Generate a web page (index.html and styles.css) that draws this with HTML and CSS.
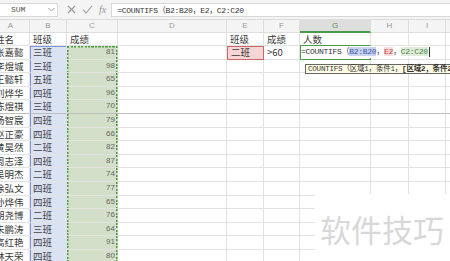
FILE: index.html
```html
<!DOCTYPE html>
<html lang="zh-CN">
<head>
  <meta charset="UTF-8">
  <title>COUNTIFS</title>
  <link rel="stylesheet" href="styles.css">
</head>
<body>
  <div class="app">
    <div class="formula-bar">
      <div class="name-box">
        <span>SUM</span>
        <svg class="chev" width="7" height="5" viewBox="0 0 7 5"><path d="M0.5 1l3 3 3-3" fill="none" stroke="#999" stroke-width="1"/></svg>
      </div>
      <div class="fx-tools">
        <svg width="9" height="9" viewBox="0 0 9 9"><path d="M1 1l7 7M8 1l-7 7" stroke="#999" stroke-width="1.1"/></svg>
        <svg width="11" height="9" viewBox="0 0 11 9"><path d="M1 4.5l3 3.5 6-7" fill="none" stroke="#999" stroke-width="1.1"/></svg>
        <span class="fx">fx</span>
      </div>
      <div class="formula-input">=COUNTIFS（B2:B20，E2，C2:C20</div>
    </div>

    <div class="sheet">
      <div class="row heads">
        <div class="cell">A</div><div class="cell">B</div><div class="cell">C</div><div class="cell">D</div>
        <div class="cell">E</div><div class="cell">F</div><div class="cell active-head">G</div><div class="cell">H</div>
        <div class="cell">I</div><div class="cell"></div>
      </div>
      <div class="row">
        <div class="cell name">姓名</div><div class="cell">班级</div><div class="cell">成绩</div><div class="cell"></div>
        <div class="cell">班级</div><div class="cell">成绩</div><div class="cell above-active">人数</div><div class="cell"></div>
        <div class="cell"></div><div class="cell"></div>
      </div>
      <div class="row first">
        <div class="cell name">张嘉懿</div><div class="cell cls">三班</div><div class="cell score">81</div><div class="cell"></div>
        <div class="cell crit">二班</div><div class="cell">&gt;60</div>
        <div class="cell active">
          <div class="edit">=COUNTIFS<span class="full">（</span><span class="ref-b">B2:B20</span><span class="full">，</span><span class="ref-e">E2</span><span class="full">，</span><span class="ref-c">C2:C20</span><span class="caret"></span></div>
        </div>
        <div class="cell"></div><div class="cell"></div><div class="cell"></div>
      </div>
    </div>

    <div class="tip">COUNTIFS（区域1，条件1，<b>[区域2，条件2]</b>，…）</div>

    <div class="mark">软件技巧</div>
  </div>

  <script>
    const rows = [
      ['李煜城', '三班', 98], ['王懿轩', '五班', 65], ['刘烨华', '四班', 96],
      ['陈煜祺', '三班', 70], ['杨智宸', '四班', 79], ['赵正豪', '四班', 66],
      ['黄昊然', '二班', 82], ['周志泽', '四班', 87], ['吴明杰', '二班', 74],
      ['徐弘文', '四班', 77], ['孙烨伟', '四班', 65], ['胡尧博', '二班', 76],
      ['朱鹏涛', '三班', 64], ['高红艳', '四班', 91], ['林天荣', '四班', 80]
    ];
    const sheet = document.querySelector('.sheet');

    rows.forEach(([name, cls, score], i) => {
      const row = document.createElement('div');
      row.className = i === 3 ? 'row sep' : 'row';
      row.innerHTML = `
        <div class="cell name">${name}</div>
        <div class="cell cls">${cls}</div>
        <div class="cell score">${score}</div>
        <div class="cell"></div><div class="cell"></div><div class="cell"></div>
        <div class="cell"></div><div class="cell"></div><div class="cell"></div><div class="cell"></div>
      `;
      sheet.appendChild(row);
    });
  </script>
</body>
</html>
```

FILE: styles.css
```css
* {
  margin: 0;
  padding: 0;
  box-sizing: border-box;
}

body {
  width: 450px;
  height: 261px;
  overflow: hidden;
  background: #fff;
  font-family: 'Noto Sans CJK SC', sans-serif;
  color: #333;
}

.app {
  position: relative;
  width: 450px;
  height: 261px;
  overflow: hidden;
}

/* Formula bar */
.formula-bar {
  display: flex;
  align-items: center;
  height: 20px;
  background: #f4f4f4;
  border-bottom: 1px solid #dcdcdc;
}

.name-box {
  display: flex;
  align-items: center;
  justify-content: space-between;
  width: 58px;
  height: 14px;
  padding: 0 2px 0 11px;
  background: #fff;
  border: 1px solid #d8d8d8;
  border-left: none;
  font-family: 'Liberation Mono', monospace;
  font-size: 8px;
  color: #555;
}

.fx-tools {
  display: flex;
  align-items: center;
  gap: 6px;
  padding: 0 5px 0 9px;
}

.fx {
  font-family: 'Liberation Serif', serif;
  font-style: italic;
  font-size: 10px;
  color: #999;
}

.formula-input {
  flex: 1;
  height: 14px;
  padding-left: 5px;
  line-height: 13px;
  background: #fff;
  border: 1px solid #d8d8d8;
  border-right: none;
  font-family: 'Liberation Mono', 'Noto Sans CJK SC', monospace;
  font-size: 8px;
  letter-spacing: -0.3px;
  color: #333;
  white-space: nowrap;
}

/* Sheet grid */
.sheet {
  margin-left: -8px;
}

.row {
  display: grid;
  grid-template-columns: 38px 37px 51px 109px 37px 36px 71px 38px 37px 60px;
  height: 13px;
}

.row + .row + .row {
  height: 13.6px;
}

.cell {
  position: relative;
  padding: 0 3px;
  border-right: 1px solid #e2e2e2;
  border-bottom: 1px solid #e2e2e2;
  font-size: 9.5px;
  line-height: 12px;
  color: #3a3a3a;
  white-space: nowrap;
  overflow: hidden;
}

.row.sep .cell {
  border-bottom-color: #bdbdbd;
}

.heads .cell {
  background: #f4f4f4;
  border-color: #dedede;
  text-align: center;
  font-family: 'Liberation Sans', sans-serif;
  font-size: 8px;
  color: #9a9a9a;
}

.heads .active-head {
  background: #dedede;
  color: #4a9a4a;
  border-bottom: 2px solid #4a9a4a;
}

.name {
  padding-left: 3px;
}

.cls {
  background: #dbe2f4;
  border-right-color: transparent;
  box-shadow: inset 1px 0 #7f95d6;
  color: #444;
}

.first .cls {
  box-shadow: inset 1px 0 #7f95d6, inset 0 1px #7f95d6;
}

.score {
  padding-right: 2px;
  text-align: right;
  font-family: 'Liberation Sans', sans-serif;
  font-size: 8px;
  color: #666;
  background-color: #d4dfc9;
  border-right-color: transparent;
  background-image:
    repeating-linear-gradient(to bottom, #4f9c40 0 2px, transparent 2px 3.5px),
    repeating-linear-gradient(to bottom, #4f9c40 0 2px, transparent 2px 3.5px);
  background-size: 1.5px 100%, 1.5px 100%;
  background-position: left top, right top;
  background-repeat: no-repeat;
}

.first .score {
  background-image:
    repeating-linear-gradient(to bottom, #4f9c40 0 2px, transparent 2px 3.5px),
    repeating-linear-gradient(to bottom, #4f9c40 0 2px, transparent 2px 3.5px),
    repeating-linear-gradient(to right, #4f9c40 0 2px, transparent 2px 3.5px);
  background-size: 1.5px 100%, 1.5px 100%, 100% 1.5px;
  background-position: left top, right top, left top;
}

.crit {
  background: #f5d5d5;
  border: 1px solid #c96b6b;
  line-height: 11px;
}

.above-active {
  border-bottom: 1px solid #4a9a4a;
}

.active {
  overflow: visible;
  z-index: 2;
  border: 1.5px solid #4a9a4a;
  border-top: none;
}

.edit {
  position: absolute;
  left: 0;
  top: 0;
  height: 12px;
  padding-right: 14px;
  background: #fff;
  font-family: 'Liberation Mono', 'Noto Sans CJK SC', monospace;
  font-size: 8px;
  letter-spacing: -0.3px;
  line-height: 12px;
  color: #333;
}

.ref-b {
  background: #c9d3ef;
  color: #3956a8;
}

.ref-e {
  background: #f6dcdc;
  color: #c03c3c;
}

.ref-c {
  background: #e2eadc;
  color: #3f8a3f;
}

.caret {
  display: inline-block;
  width: 1px;
  height: 10px;
  margin-left: 1px;
  vertical-align: middle;
  background: #333;
}

/* Function hint */
.tip {
  position: absolute;
  left: 305px;
  top: 64px;
  height: 10px;
  padding: 0 2px;
  background: #fffde6;
  border: 1px solid #666;
  font-family: 'Liberation Mono', 'Noto Sans CJK SC', monospace;
  font-size: 7.5px;
  line-height: 8px;
  letter-spacing: -0.2px;
  color: #333;
  white-space: nowrap;
}

.tip b {
  font-weight: 700;
}

/* Watermark */
.mark {
  position: absolute;
  left: 315px;
  top: 194px;
  right: 0;
  bottom: 0;
  padding: 19px 0 0 5px;
  background: #fff;
  font-size: 31px;
  line-height: 1;
  color: #d8d8d8;
  white-space: nowrap;
}
```
